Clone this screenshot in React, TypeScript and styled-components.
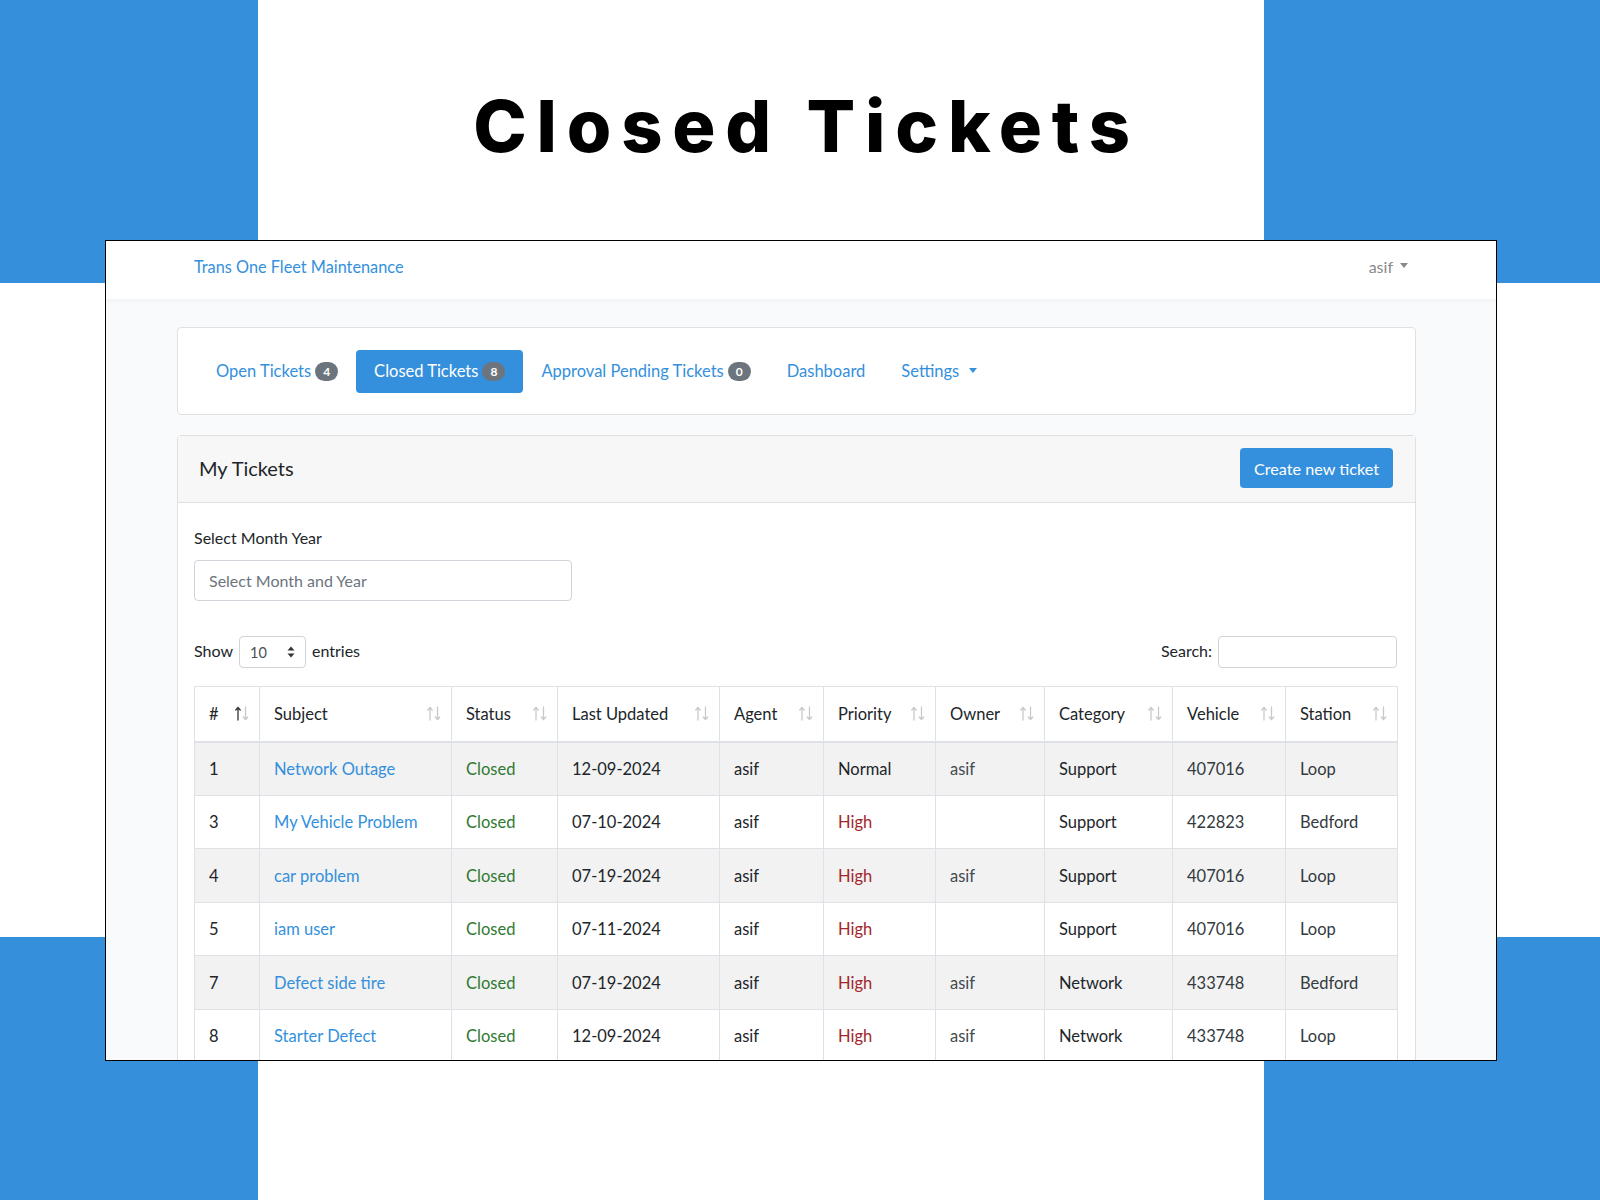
import React from 'react';
import styled, { createGlobalStyle } from 'styled-components';

const GlobalStyle = createGlobalStyle`
    html, body {
        margin: 0;
        padding: 0;
        background: #ffffff;
    }
    * {
        box-sizing: border-box;
    }
`

const BLUE = '#358fdb';
const LINK = '#3490dc';
const UI_FONT = `Lato, "Noto Sans", "Liberation Sans", sans-serif`;

const Page = styled.div`
    width: 1600px;
    height: 1200px;
    overflow: hidden;
    background-color: #ffffff;
    background-image:
        linear-gradient(${BLUE}, ${BLUE}),
        linear-gradient(${BLUE}, ${BLUE}),
        linear-gradient(${BLUE}, ${BLUE}),
        linear-gradient(${BLUE}, ${BLUE});
    background-repeat: no-repeat;
    background-size: 258px 283px, 336px 283px, 258px 263px, 336px 263px;
    background-position: 0 0, 1264px 0, 0 937px, 1264px 937px;
    display: flex;
    flex-direction: column;
`

const TitleBar = styled.header`
    height: 240px;
    padding: 90px 0 0 13px;
    display: flex;
    justify-content: center;
`

const Title = styled.h1`
    margin: 0;
    font-family: Inter, "DejaVu Sans", sans-serif;
    font-weight: 800;
    font-size: 72px;
    line-height: 1;
    letter-spacing: 9.8px;
    color: #000000;
`

const Frame = styled.div`
    margin-left: 105px;
    width: 1392px;
    height: 821px;
    border: 1px solid #000000;
    overflow: hidden;
    background: #f8fafc;
    font-family: ${UI_FONT};
    color: #212529;
`

const Navbar = styled.nav`
    height: 58px;
    padding: 0 88px 7px;
    background: #ffffff;
    box-shadow: 0 2px 4px rgba(0, 0, 0, 0.04);
    display: flex;
    align-items: center;
    justify-content: space-between;
`

const Brand = styled.a`
    font-size: 16.3px;
    color: ${LINK};
`

const UserMenu = styled.span`
    display: flex;
    align-items: center;
    gap: 7px;
    font-size: 16px;
    color: #8a8a8a;
`

const Caret = styled.span<{ $color?: string }>`
    display: inline-block;
    width: 0;
    height: 0;
    border-left: 4.5px solid transparent;
    border-right: 4.5px solid transparent;
    border-top: 5px solid ${p => p.$color || '#8a8a8a'};
    margin-top: -2px;
`

const Main = styled.main`
    padding: 28px 80px 0 71px;
    display: flex;
    flex-direction: column;
    gap: 20px;
`

const Card = styled.section`
    background: #ffffff;
    border: 1px solid #e0e0e0;
    border-radius: 4px;
`

const PillBar = styled(Card)`
    height: 88px;
    padding: 0 20px;
    display: flex;
    align-items: center;
`

const Pill = styled.a<{ $active?: boolean }>`
    height: 43px;
    padding: 0 18px;
    display: flex;
    align-items: center;
    gap: 4px;
    border-radius: 4px;
    font-size: 16.5px;
    color: ${p => (p.$active ? '#ffffff' : LINK)};
    background: ${p => (p.$active ? LINK : 'transparent')};
`

const Badge = styled.span`
    min-width: 23px;
    height: 19px;
    padding: 0 7px;
    border-radius: 10px;
    background: #6c757d;
    color: #ffffff;
    font-size: 12px;
    font-weight: 700;
    display: inline-flex;
    align-items: center;
    justify-content: center;
`

const CardHeader = styled.div`
    height: 67px;
    padding: 0 22px 2px 21px;
    background: #f7f7f7;
    border-bottom: 1px solid #e0e0e0;
    display: flex;
    align-items: center;
    justify-content: space-between;
`

const CardTitle = styled.h2`
    margin: 0;
    font-size: 20px;
    font-weight: 400;
    color: #212529;
`

const PrimaryButton = styled.button`
    height: 40px;
    padding: 0 14px;
    border: none;
    border-radius: 4px;
    background: ${LINK};
    color: #ffffff;
    font-family: ${UI_FONT};
    font-size: 16.2px;
`

const CardBody = styled.div`
    padding: 23px 18px 0 16px;
`

const Label = styled.label`
    display: block;
    font-size: 16px;
    line-height: 24px;
    margin-bottom: 10px;
`

const TextInput = styled.input<{ $width: number; $height: number }>`
    width: ${p => p.$width}px;
    height: ${p => p.$height}px;
    padding: 0 14px;
    border: 1px solid #ced4da;
    border-radius: 4px;
    background: #ffffff;
    font-family: ${UI_FONT};
    font-size: 16px;
    color: #495057;
    &::placeholder {
        color: #6c757d;
    }
`

const TableTools = styled.div`
    margin-top: 35px;
    height: 32px;
    display: flex;
    align-items: center;
    justify-content: space-between;
    font-size: 16px;
`

const ToolGroup = styled.div`
    display: flex;
    align-items: center;
    gap: 6px;
    padding-bottom: 3px;
`

const LengthSelect = styled.div`
    width: 67px;
    height: 32px;
    margin-bottom: -3px;
    padding: 0 10px;
    border: 1px solid #ced4da;
    border-radius: 4px;
    background: #ffffff;
    display: flex;
    align-items: center;
    justify-content: space-between;
    font-size: 14.5px;
    color: #495057;
`

const SearchBox = styled.div`
    margin-bottom: -3px;
    display: flex;
`

const Table = styled.table`
    margin-top: 18px;
    width: 1203px;
    border-collapse: collapse;
    table-layout: fixed;
    font-size: 16.5px;
`

const Th = styled.th`
    height: 55px;
    padding: 0 10px 0 14px;
    text-align: left;
    font-weight: 400;
    border: 1px solid #dee2e6;
    border-bottom: 2px solid #dee2e6;
    background: #ffffff;
`

const ThInner = styled.div`
    display: flex;
    align-items: center;
    justify-content: space-between;
`

const Row = styled.tr<{ $striped: boolean }>`
    background: ${p => (p.$striped ? '#f2f2f2' : '#ffffff')};
`

const Td = styled.td<{ $tone?: string }>`
    height: 53.5px;
    padding: 1px 14px 0;
    border: 1px solid #dee2e6;
    color: ${p => p.$tone || '#212529'};
    white-space: nowrap;
`

const SubjectLink = styled.a`
    color: ${LINK};
`

function SortArrows({ active }: { active?: boolean }) {
    return (
        <svg width="14" height="15" viewBox="0 0 14 15">
            <g fill="none" strokeWidth="1.3" strokeLinecap="round" strokeLinejoin="round">
                <path d="M3 14V1.5M0.8 4L3 1.5 5.2 4" stroke={active ? '#333333' : '#c9c9c9'} />
                <path d="M10.5 1v12.5M8.3 11l2.2 2.5 2.2-2.5" stroke="#c9c9c9" />
            </g>
        </svg>
    );
}

function SelectArrows() {
    return (
        <svg width="8" height="12" viewBox="0 0 8 12">
            <path d="M4 0.5L7.5 4.5H0.5Z M4 11.5L0.5 7.5H7.5Z" fill="#333333" />
        </svg>
    );
}

const columns = [
    { label: '#', width: 65 },
    { label: 'Subject', width: 192 },
    { label: 'Status', width: 106 },
    { label: 'Last Updated', width: 162 },
    { label: 'Agent', width: 104 },
    { label: 'Priority', width: 112 },
    { label: 'Owner', width: 109 },
    { label: 'Category', width: 128 },
    { label: 'Vehicle', width: 113 },
    { label: 'Station', width: 112 },
];

const tickets = [
    { id: 1, subject: 'Network Outage', updated: '12-09-2024', priority: 'Normal', owner: 'asif', category: 'Support', vehicle: '407016', station: 'Loop' },
    { id: 3, subject: 'My Vehicle Problem', updated: '07-10-2024', priority: 'High', owner: '', category: 'Support', vehicle: '422823', station: 'Bedford' },
    { id: 4, subject: 'car problem', updated: '07-19-2024', priority: 'High', owner: 'asif', category: 'Support', vehicle: '407016', station: 'Loop' },
    { id: 5, subject: 'iam user', updated: '07-11-2024', priority: 'High', owner: '', category: 'Support', vehicle: '407016', station: 'Loop' },
    { id: 7, subject: 'Defect side tire', updated: '07-19-2024', priority: 'High', owner: 'asif', category: 'Network', vehicle: '433748', station: 'Bedford' },
    { id: 8, subject: 'Starter Defect', updated: '12-09-2024', priority: 'High', owner: 'asif', category: 'Network', vehicle: '433748', station: 'Loop' },
];

function App() {
    return (
        <Page>
            <GlobalStyle />
            <TitleBar>
                <Title>Closed Tickets</Title>
            </TitleBar>

            <Frame>
                <Navbar>
                    <Brand>Trans One Fleet Maintenance</Brand>
                    <UserMenu>
                        asif <Caret />
                    </UserMenu>
                </Navbar>

                <Main>
                    <PillBar>
                        <Pill>Open Tickets <Badge>4</Badge></Pill>
                        <Pill $active>Closed Tickets <Badge>8</Badge></Pill>
                        <Pill>Approval Pending Tickets <Badge>0</Badge></Pill>
                        <Pill>Dashboard</Pill>
                        <Pill>Settings <Caret $color={LINK} style={{ marginLeft: 6 }} /></Pill>
                    </PillBar>

                    <Card>
                        <CardHeader>
                            <CardTitle>My Tickets</CardTitle>
                            <PrimaryButton>Create new ticket</PrimaryButton>
                        </CardHeader>

                        <CardBody>
                            <Label>Select Month Year</Label>
                            <TextInput $width={378} $height={41} placeholder="Select Month and Year" />

                            <TableTools>
                                <ToolGroup>
                                    Show
                                    <LengthSelect>
                                        10 <SelectArrows />
                                    </LengthSelect>
                                    entries
                                </ToolGroup>
                                <ToolGroup>
                                    Search:
                                    <SearchBox>
                                        <TextInput $width={179} $height={32} />
                                    </SearchBox>
                                </ToolGroup>
                            </TableTools>

                            <Table>
                                <colgroup>
                                    {columns.map(c => (
                                        <col key={c.label} style={{ width: c.width }} />
                                    ))}
                                </colgroup>
                                <thead>
                                    <tr>
                                        {columns.map((c, i) => (
                                            <Th key={c.label}>
                                                <ThInner>
                                                    {c.label}
                                                    <SortArrows active={i === 0} />
                                                </ThInner>
                                            </Th>
                                        ))}
                                    </tr>
                                </thead>
                                <tbody>
                                    {tickets.map((t, i) => (
                                        <Row key={t.id} $striped={i % 2 === 0}>
                                            <Td>{t.id}</Td>
                                            <Td><SubjectLink>{t.subject}</SubjectLink></Td>
                                            <Td $tone="#2f7a32">Closed</Td>
                                            <Td>{t.updated}</Td>
                                            <Td>asif</Td>
                                            <Td $tone={t.priority === 'High' ? '#a3262c' : undefined}>{t.priority}</Td>
                                            <Td $tone="#444a50">{t.owner}</Td>
                                            <Td>{t.category}</Td>
                                            <Td $tone="#333a40">{t.vehicle}</Td>
                                            <Td $tone="#333a40">{t.station}</Td>
                                        </Row>
                                    ))}
                                </tbody>
                            </Table>
                        </CardBody>
                    </Card>
                </Main>
            </Frame>
        </Page>
    );
}

export default App;
